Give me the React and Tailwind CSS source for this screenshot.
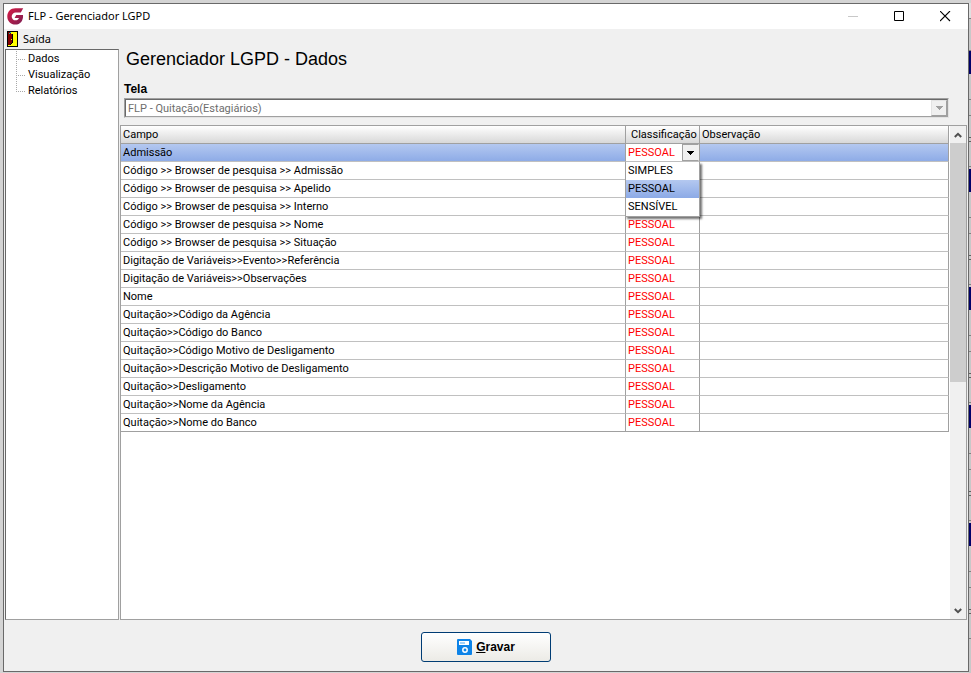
import { useState } from "react";

const FIELDS = [
  "Admissão",
  "Código >> Browser de pesquisa >> Admissão",
  "Código >> Browser de pesquisa >> Apelido",
  "Código >> Browser de pesquisa >> Interno",
  "Código >> Browser de pesquisa >> Nome",
  "Código >> Browser de pesquisa >> Situação",
  "Digitação de Variáveis>>Evento>>Referência",
  "Digitação de Variáveis>>Observações",
  "Nome",
  "Quitação>>Código da Agência",
  "Quitação>>Código do Banco",
  "Quitação>>Código Motivo de Desligamento",
  "Quitação>>Descrição Motivo de Desligamento",
  "Quitação>>Desligamento",
  "Quitação>>Nome da Agência",
  "Quitação>>Nome do Banco",
];

const OPTIONS = ["SIMPLES", "PESSOAL", "SENSÍVEL"];

const TREE = ["Dados", "Visualização", "Relatórios"];

function TitleBar() {
  return (
    <header className="flex h-[25px] shrink-0 items-center bg-white">
      <svg className="ml-[3px] h-[17px] w-[17px]" viewBox="0 0 17 17" aria-hidden="true">
        <defs>
          <linearGradient id="logo" x1="0" y1="0" x2="1" y2="1">
            <stop offset="0" stopColor="#d81b45" />
            <stop offset="1" stopColor="#7c1f52" />
          </linearGradient>
        </defs>
        <path
          fill="url(#logo)"
          d="M16.2 0.3 L13.8 4.4 H8.8 C6.4 4.4 4.7 6.1 4.7 8.4 C4.7 10.8 6.4 12.3 8.4 12.3 C10.3 12.3 11.5 11.4 11.9 10 H7.6 L9.2 7 H16 C16.6 12.6 13.2 16.6 8.4 16.6 C3.6 16.6 0.3 13 0.3 8.4 C0.3 3.8 3.6 0.3 8.4 0.3 Z"
        />
      </svg>
      <h1 className="ml-1 flex-1 font-['Noto_Sans','Open_Sans',sans-serif] text-[11px]">FLP - Gerenciador LGPD</h1>
      <div className="flex">
        <button aria-label="Minimizar" disabled className="flex h-6 w-[46px] items-center justify-center">
          <svg className="h-[11px] w-[11px]" viewBox="0 0 11 11">
            <path d="M0 5.5H10" stroke="#c8c8c8" />
          </svg>
        </button>
        <button aria-label="Maximizar" className="flex h-6 w-[46px] items-center justify-center">
          <svg className="h-[11px] w-[11px]" viewBox="0 0 11 11">
            <path d="M0.5 0.5H9.5V9.5H0.5Z" fill="none" stroke="#000" />
          </svg>
        </button>
        <button aria-label="Fechar" className="flex h-6 w-[46px] items-center justify-center">
          <svg className="h-[11px] w-[11px]" viewBox="0 0 11 11">
            <path d="M0 0L10 10M10 0L0 10" stroke="#000" strokeWidth="1.1" />
          </svg>
        </button>
      </div>
    </header>
  );
}

function MenuBar() {
  return (
    <nav className="flex h-5 shrink-0 items-center pl-[3px]">
      <button className="flex items-center gap-[5px] font-['Noto_Sans','Open_Sans',sans-serif] text-[11px]">
        <svg className="h-4 w-[11px]" viewBox="0 0 11 16" shapeRendering="crispEdges" aria-hidden="true">
          <path fill="#000" d="M0 0H11V16H0Z" />
          <path fill="#ffff00" d="M4 1H10V15H1V14H3V13H4Z" />
          <path fill="#800000" d="M1 1H3V2H4V3H5V12H4V13H3V14H1Z" />
          <path fill="#000" d="M5 3H6V12H5V13H4V12H5ZM3 13H4V14H3Z" />
          <path fill="#00c0c0" d="M3 1H4V2H3ZM2 2H3V3H2Z" />
          <path fill="#ffff00" d="M4 8H5V9H4Z" />
        </svg>
        Saída
      </button>
    </nav>
  );
}

function Tree() {
  return (
    <aside className="w-[114px] shrink-0 border border-[#a0a0a0] border-t-[#696969] border-l-[#696969] bg-white pt-px pl-[10px]">
      <ul>
        {TREE.map((label, i) => (
          <li key={label} className="flex h-4 items-center">
            <svg className="h-4 w-[9px]" viewBox="0 0 9 16" aria-hidden="true">
              <path
                d={i === TREE.length - 1 ? "M0.5 0V9M0 8.5H9" : "M0.5 0V16M0 8.5H9"}
                fill="none"
                stroke="#a8a8a8"
                strokeDasharray="1 1"
              />
            </svg>
            <button className="ml-[3px] leading-4">{label}</button>
          </li>
        ))}
      </ul>
    </aside>
  );
}

function ClassificationEditor(props) {
  return (
    <div className="relative h-[17px] bg-white">
      <select
        aria-label="Classificação"
        value={props.value}
        onChange={(e) => props.onChange(e.target.value)}
        className="block h-[17px] w-full appearance-none pt-px pl-[2px] leading-4 text-[#f00]"
      >
        {OPTIONS.map((option) => (
          <option key={option}>{option}</option>
        ))}
      </select>
      <span className="pointer-events-none absolute top-0 right-0 flex h-[17px] w-[17px] items-center justify-center border border-[#a0a0a0] border-r-[#f0f0f0] bg-[#f0f0f0]">
        <svg className="h-1 w-[7px]" viewBox="0 0 7 4" shapeRendering="crispEdges">
          <path d="M0 0H7V1H6V2H5V3H4V4H3V3H2V2H1V1H0Z" />
        </svg>
      </span>
      <ul
        role="listbox"
        aria-label="Opções de classificação"
        className="absolute top-full -left-px z-10 mt-px w-[75px] border border-t-0 border-[#a0a0a0] bg-white text-black shadow-[2px_2px_2px_rgba(0,0,0,0.55)]"
      >
        {OPTIONS.map((option) => (
          <li
            key={option}
            role="option"
            aria-selected={option === props.value}
            onClick={() => props.onChange(option)}
            className={
              option === props.value
                ? "h-[18px] bg-linear-to-b from-[#b4c8f0] to-[#8caae6] pl-[2px] leading-[18px]"
                : "h-[18px] pl-[2px] leading-[18px]"
            }
          >
            {option}
          </li>
        ))}
      </ul>
    </div>
  );
}

function FieldGrid() {
  const [first, setFirst] = useState("PESSOAL");
  const head = "h-[18px] border-r border-b border-[#a0a0a0] bg-linear-to-b from-white to-[#d8d8d8] p-0 pt-px pl-[2px] text-left font-normal leading-4";

  return (
    <div className="flex min-h-0 flex-1 border border-[#a0a0a0] bg-white">
      <div className="min-w-0 flex-1">
        <table className="w-full table-fixed border-separate border-spacing-0">
          <colgroup>
            <col />
            <col className="w-[74px]" />
            <col className="w-[249px]" />
          </colgroup>
          <thead>
            <tr>
              <th className={head}>Campo</th>
              <th className={`${head} whitespace-nowrap`}>
                <span className="pl-[3px]">Classificação</span>
              </th>
              <th className={head}>Observação</th>
            </tr>
          </thead>
          <tbody>
            {FIELDS.map((field, i) => (
              <tr key={field} className={i === 0 ? "bg-linear-to-b from-[#b4c8f0] to-[#8caae6]" : "last:[&>td]:border-b-[#a0a0a0]"}>
                <td className="h-[18px] truncate border-r border-b border-[#c0c0c0] border-r-[#a0a0a0] p-0 pt-px pl-[2px] leading-4">
                  {field}
                </td>
                <td className="h-[18px] border-r border-b border-[#c0c0c0] border-r-[#a0a0a0] p-0 leading-4 text-[#f00]">
                  {i === 0 && <ClassificationEditor value={first} onChange={setFirst} />}
                  {/* the open list covers the rows right below the editor */}
                  {i > OPTIONS.length && <div className="pt-px pl-[2px]">PESSOAL</div>}
                </td>
                <td className="h-[18px] border-r border-b border-[#c0c0c0] border-r-[#a0a0a0] p-0" />
              </tr>
            ))}
          </tbody>
        </table>
      </div>
      <div className="ml-px flex w-4 shrink-0 flex-col bg-[#f0f0f0]">
        <button aria-label="Rolar para cima" className="flex h-[17px] items-center justify-center">
          <svg className="h-[6px] w-2" viewBox="0 0 8 6">
            <path d="M0.8 5L4 1.8L7.2 5" fill="none" stroke="#505050" strokeWidth="2" />
          </svg>
        </button>
        <div className="flex flex-1 flex-col">
          <div className="basis-[52%] bg-[#cdcdcd]" />
        </div>
        <button aria-label="Rolar para baixo" className="flex h-[17px] items-center justify-center">
          <svg className="h-[6px] w-2" viewBox="0 0 8 6">
            <path d="M0.8 1L4 4.2L7.2 1" fill="none" stroke="#505050" strokeWidth="2" />
          </svg>
        </button>
      </div>
    </div>
  );
}

// Slice of the application window that shows behind this one on the right
function BackdropEdge() {
  return (
    <div className="flex w-[2px] shrink-0 flex-col overflow-hidden bg-[#c8c8c8]">
      <div className="h-[16px] shrink-0 border-b border-[#808080] bg-[#e0e0e0]" />
      <div className="h-8 shrink-0 border-b border-[#808080]" />
      {[0, 1, 2, 3, 4].map((n) => (
        <div key={n} className="h-[118px] shrink-0">
          <div className="h-[23px] bg-[#000068]" />
          <div className="h-[26px] border-b border-[#808080]" />
          <div className="h-4 border-b border-[#808080]" />
          <div className="h-[22px] border-b border-[#606060]" />
          <div className="h-1 border-b border-[#606060]" />
          <div className="h-[25px] border-b border-[#808080]" />
        </div>
      ))}
    </div>
  );
}

function App() {
  return (
    <div className="flex h-screen bg-[#d4d4d4] pt-[3px] pl-[3px] font-[Roboto,'Liberation_Sans',sans-serif] text-[11px] text-black">
      <div className="mb-px flex min-w-0 flex-1 flex-col border border-[#696969] bg-[#f0f0f0]">
        <TitleBar />
        <MenuBar />
        <div className="flex min-h-0 flex-1 pr-px pl-px">
          <Tree />
          <main className="ml-px flex min-w-0 flex-1 flex-col">
            <h2 className="pl-[6px] font-['Liberation_Sans',Arial,sans-serif] text-[18px] leading-5">Gerenciador LGPD - Dados</h2>
            <label htmlFor="tela" className="mt-3 pl-1 font-['Liberation_Sans',Arial,sans-serif] text-xs leading-4 font-bold">
              Tela
            </label>
            <div className="relative mt-px mr-[18px] mb-[7px] ml-1 border border-[#e3e3e3] border-t-[#a0a0a0] border-l-[#a0a0a0]">
              <select
                id="tela"
                disabled
                className="block h-[18px] w-full appearance-none border border-[#a0a0a0] border-t-[#696969] border-l-[#696969] bg-white pt-px pl-[2px] leading-[15px] text-[#6d6d6d] opacity-100"
              >
                <option>FLP - Quitação(Estagiários)</option>
              </select>
              <span className="pointer-events-none absolute top-px right-px flex h-4 w-4 items-center justify-center border border-[#a0a0a0] border-t-[#e3e3e3] border-l-[#e3e3e3] bg-[#f0f0f0]">
                <svg className="h-1 w-[7px]" viewBox="0 0 7 4" shapeRendering="crispEdges">
                  <path d="M0 0H7V1H6V2H5V3H4V4H3V3H2V2H1V1H0Z" fill="#a0a0a0" />
                </svg>
              </span>
            </div>
            <FieldGrid />
          </main>
        </div>
        <footer className="flex h-[51px] shrink-0 items-center justify-center pt-[2px]">
          <button className="flex h-[30px] w-[130px] items-center justify-center gap-1 rounded-[3px] border border-[#003c74] bg-linear-to-b from-white to-[#ecebe6] font-['Liberation_Sans',Arial,sans-serif] text-xs font-bold">
            <svg className="h-4 w-[15px]" viewBox="0 0 15 16" aria-hidden="true">
              <path d="M0 1Q0 0 1 0H13L15 2V15Q15 16 14 16H1Q0 16 0 15Z" fill="#0e84e8" />
              <path d="M2 2H12V6H2Z" fill="#fff" />
              <path d="M3 3H8V5H3Z" fill="#a4d2f8" />
              <circle cx="8" cy="11" r="2.2" fill="none" stroke="#fff" strokeWidth="1.5" />
            </svg>
            <span>
              <span className="underline">G</span>ravar
            </span>
          </button>
        </footer>
      </div>
      <BackdropEdge />
    </div>
  );
}

export default App;
